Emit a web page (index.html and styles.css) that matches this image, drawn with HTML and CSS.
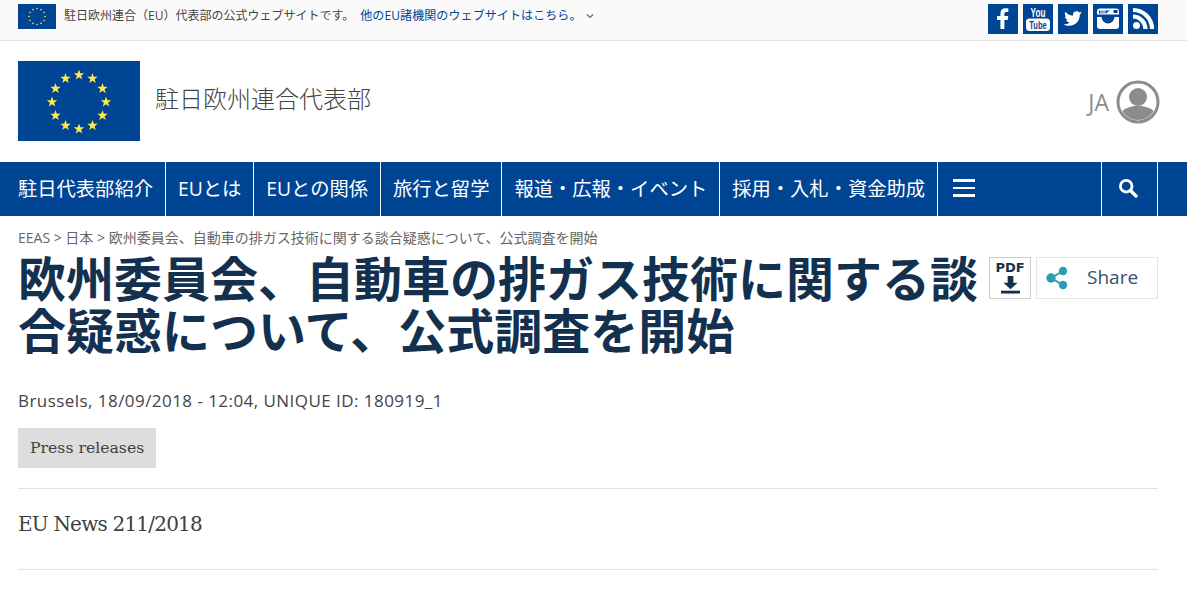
FILE: index.html
```html
<!DOCTYPE html>
<html lang="ja">
<head>
  <meta charset="UTF-8" />
  <meta name="viewport" content="width=device-width, initial-scale=1.0"/>
  <title>駐日欧州連合代表部</title>
  <link rel="stylesheet" href="styles.css">
</head>
<body>

  <svg class="defs" width="0" height="0">
    <symbol id="star" viewBox="-1 -1 2 2">
      <polygon points="0,-1 .235,-.324 .951,-.309 .38,.124 .588,.809 0,.4 -.588,.809 -.38,.124 -.951,-.309 -.235,-.324"/>
    </symbol>
  </svg>

  <div class="topbar">
    <div class="topbar-left">
      <svg class="mini-flag" viewBox="0 0 38 25">
        <rect width="38" height="25" fill="#004494"/>
        <g fill="#ffe94d">
          <circle cx="19" cy="4.500" r=".8"/><circle cx="23" cy="5.600" r=".8"/><circle cx="26" cy="8.500" r=".8"/>
          <circle cx="27" cy="12.500" r=".8"/><circle cx="26" cy="16.500" r=".8"/><circle cx="23" cy="19.400" r=".8"/>
          <circle cx="19" cy="20.500" r=".8"/><circle cx="15" cy="19.400" r=".8"/><circle cx="12" cy="16.500" r=".8"/>
          <circle cx="11" cy="12.500" r=".8"/><circle cx="12" cy="8.500" r=".8"/><circle cx="15" cy="5.600" r=".8"/>
        </g>
      </svg>
      <span class="topbar-text">駐日欧州連合（EU）代表部の公式ウェブサイトです。</span>
      <a class="topbar-link">他のEU諸機関のウェブサイトはこちら。</a>
      <svg class="chevron" viewBox="0 0 8 6"><path d="M1 1.500 4 4.500 7 1.500" fill="none" stroke="#666" stroke-width="1.200"/></svg>
    </div>
    <div class="socials">
      <a class="social">
        <svg viewBox="0 0 30 30"><path transform="translate(1.200 1.200) scale(.92)" fill="#fff" d="M16.500 26V16h3.600l.6-4.200h-4.200V9.300c0-1.200.4-2 2.100-2h2.200V3.500c-.4 0-1.700-.2-3.200-.2-3.200 0-5.400 2-5.400 5.500v3H8.500V16h3.700v10z"/></svg>
      </a>
      <a class="social">
        <svg viewBox="0 0 30 30">
          <text class="yt-you" transform="translate(15 12.500) scale(.68 1)" text-anchor="middle">You</text>
          <rect x="3" y="14.500" width="24" height="12.500" rx="3.500" fill="#fff"/>
          <text class="yt-tube" transform="translate(15 25) scale(.68 1)" text-anchor="middle">Tube</text>
        </svg>
      </a>
      <a class="social">
        <svg viewBox="0 0 30 30"><path transform="translate(2.800 2.200) scale(.82)" fill="#fff" d="M26 8.300c-.8.400-1.700.6-2.600.7.900-.6 1.600-1.400 2-2.500-.9.500-1.800.9-2.900 1.100-.8-.9-2-1.500-3.300-1.500-2.500 0-4.500 2-4.500 4.500 0 .4 0 .7.100 1-3.700-.2-7-2-9.200-4.700-.4.700-.6 1.400-.6 2.300 0 1.600.8 2.900 2 3.700-.7 0-1.400-.2-2-.6v.1c0 2.200 1.500 4 3.600 4.400-.4.100-.8.200-1.200.2-.3 0-.6 0-.8-.1.600 1.800 2.200 3.100 4.200 3.100-1.500 1.200-3.500 1.900-5.600 1.900H3.400c2 1.300 4.400 2 6.900 2 8.300 0 12.800-6.800 12.800-12.800v-.6c.9-.6 1.700-1.400 2.300-2.300z"/></svg>
      </a>
      <a class="social">
        <svg viewBox="0 0 30 30">
          <path fill="#fff" d="M7 4.500h16a3 3 0 0 1 3 3V22a3 3 0 0 1-3 3H7a3 3 0 0 1-3-3V7.500a3 3 0 0 1 3-3z"/>
          <path fill="#004494" d="M4 10.500h22V13h-4.500a6.500 6.500 0 0 1-13 0H4z"/>
          <path fill="#004494" d="M6 6.500h11.500a6 6 0 0 0-4 3H6z"/>
          <rect x="20.500" y="6" width="4" height="3" fill="#004494"/>
          <path stroke="#fff" d="M8 5v5M10 5v5M12 5v5"/>
        </svg>
      </a>
      <a class="social">
        <svg viewBox="0 0 30 30">
          <circle cx="8.500" cy="21.500" r="3.500" fill="#fff"/>
          <path fill="none" stroke="#fff" stroke-width="4.200" d="M5 12.500a12.500 12.500 0 0 1 12.500 12.500"/>
          <path fill="none" stroke="#fff" stroke-width="4.200" d="M5 6a19 19 0 0 1 19 19"/>
        </svg>
      </a>
    </div>
  </div>

  <header class="masthead">
    <div class="brand">
      <svg class="flag" viewBox="0 0 122 80">
        <rect width="122" height="80" fill="#004494"/>
        <g fill="#ffe94d">
          <use href="#star" x="55.500" y="8.500" width="11" height="11"/>
          <use href="#star" x="69" y="12" width="11" height="11"/>
          <use href="#star" x="79" y="22" width="11" height="11"/>
          <use href="#star" x="82.500" y="35.500" width="11" height="11"/>
          <use href="#star" x="79" y="49" width="11" height="11"/>
          <use href="#star" x="69" y="59" width="11" height="11"/>
          <use href="#star" x="55.500" y="62.500" width="11" height="11"/>
          <use href="#star" x="42" y="59" width="11" height="11"/>
          <use href="#star" x="32" y="49" width="11" height="11"/>
          <use href="#star" x="28.500" y="35.500" width="11" height="11"/>
          <use href="#star" x="32" y="22" width="11" height="11"/>
          <use href="#star" x="42" y="12" width="11" height="11"/>
        </g>
      </svg>
      <div class="brand-name">駐日欧州連合代表部</div>
    </div>
    <div class="lang">
      <span class="lang-code">JA</span>
      <svg class="avatar" viewBox="0 0 44 44">
        <defs><clipPath id="avatar-clip"><circle cx="22" cy="22" r="18"/></clipPath></defs>
        <circle cx="22" cy="22" r="20" fill="none" stroke="#8c8c8c" stroke-width="3"/>
        <circle cx="22" cy="17" r="9" fill="#8c8c8c"/>
        <path clip-path="url(#avatar-clip)" fill="#8c8c8c" d="M6 44V33c0-3 3-4.500 8-6l4-1h8l4 1c5 1.500 8 3 8 6v11z"/>
      </svg>
    </div>
  </header>

  <nav class="mainnav">
    <a class="nav-item">駐日代表部紹介</a>
    <a class="nav-item">EUとは</a>
    <a class="nav-item">EUとの関係</a>
    <a class="nav-item">旅行と留学</a>
    <a class="nav-item">報道・広報・イベント</a>
    <a class="nav-item">採用・入札・資金助成</a>
    <a class="nav-burger"><span></span><span></span><span></span></a>
    <a class="nav-search">
      <svg viewBox="0 0 20 20" width="20" height="20">
        <circle cx="8.200" cy="8.200" r="5.800" fill="none" stroke="#fff" stroke-width="2.800"/>
        <path d="M12.500 12.500 18 18" stroke="#fff" stroke-width="3.400" stroke-linecap="round"/>
      </svg>
    </a>
  </nav>

  <main class="content">
    <div class="breadcrumb">EEAS &gt; 日本 &gt; 欧州委員会、自動車の排ガス技術に関する談合疑惑について、公式調査を開始</div>
    <div class="title-row">
      <h1 class="title">欧州委員会、自動車の排ガス技術に関する談合疑惑について、公式調査を開始</h1>
      <div class="actions">
        <a class="pdf-btn">
          <span class="pdf-label">PDF</span>
          <svg viewBox="0 0 22 19" width="21" height="18">
            <path fill="#14304f" d="M8 0h6v7h4.500L11 14 3.500 7H8z"/>
            <rect x="1" y="15.500" width="20" height="3" fill="#14304f"/>
          </svg>
        </a>
        <a class="share-btn">
          <svg viewBox="0 0 22 24" width="22" height="24">
            <path d="M17 5 5 12 17 19" fill="none" stroke="#2a9db0" stroke-width="2"/>
            <circle cx="17" cy="5" r="4.200" fill="#2a9db0"/>
            <circle cx="5" cy="12" r="4.700" fill="#2a9db0"/>
            <circle cx="17" cy="19" r="4.200" fill="#2a9db0"/>
          </svg>
          <span>Share</span>
        </a>
      </div>
    </div>
    <div class="meta">Brussels, 18/09/2018 - 12:04, UNIQUE ID: 180919_1</div>
    <a class="tag">Press releases</a>
    <div class="news-row">EU News 211/2018</div>
  </main>

</body>
</html>
```

FILE: styles.css
```css
body {
  margin: 0;
  background: #fff;
  font-family: "Open Sans", "Noto Sans CJK JP", sans-serif;
  color: #404040;
  overflow: hidden;
}

.defs { position: absolute; }

.topbar {
  display: flex;
  justify-content: space-between;
  height: 41px;
  padding: 4px 29px 0 18px;
  box-sizing: border-box;
  background: #fafafa;
  border-bottom: 1px solid #e3e3e3;
}

.topbar-left {
  display: flex;
  align-items: flex-start;
  font-size: 12px;
  line-height: 24px;
}

.mini-flag { width: 38px; height: 25px; margin-right: 8px; }
.topbar-text { color: #444; margin-right: 6px; }
.topbar-link { color: #004494; letter-spacing: .1px; }
.chevron { width: 8px; height: 6px; margin: 9px 0 0 4px; }

.socials { display: flex; gap: 5px; }

.social {
  width: 30px;
  height: 30px;
  background: #004494;
}

.social svg { display: block; width: 30px; height: 30px; }

.yt-you { font: 700 12px "Liberation Sans", sans-serif; fill: #fff; }
.yt-tube { font: 700 11px "Liberation Sans", sans-serif; fill: #004494; }

.masthead {
  display: flex;
  justify-content: space-between;
  align-items: center;
  height: 121px;
  padding: 0 27px 0 18px;
}

.brand { display: flex; align-items: center; margin-top: -1px; }
.flag { width: 122px; height: 80px; margin-right: 15px; }
.brand-name { font-size: 24px; color: #444; font-weight: 300; margin-top: -8px; }

.lang { display: flex; align-items: center; gap: 7px; }
.lang-code { font-size: 23px; color: #8c8c8c; }
.avatar { width: 44px; height: 44px; }

.mainnav {
  display: flex;
  height: 54px;
  background: #004494;
  padding-right: 29px;
}

.nav-item {
  display: flex;
  align-items: center;
  padding: 0 12px 3px;
  color: #fff;
  font-size: 19.300px;
  white-space: nowrap;
  border-right: 1px solid #fff;
}

.nav-item:first-child { padding-left: 18px; }

.nav-burger {
  flex: 1;
  display: flex;
  flex-direction: column;
  justify-content: center;
  gap: 5px;
  padding: 0 0 2px 15px;
}

.nav-burger span { display: block; width: 22px; height: 2.500px; background: #fff; }

.nav-search {
  display: flex;
  align-items: center;
  justify-content: center;
  width: 57px;
  padding: 0 4px 3px 0;
  box-sizing: border-box;
  border-left: 1px solid #fff;
  border-right: 1px solid #fff;
}

.content { padding: 12px 29px 0 18px; }

.breadcrumb { font-size: 14px; line-height: 20px; color: #666; margin-bottom: 5px; }

.title-row { display: flex; align-items: flex-start; }

.title {
  flex: 1;
  margin: 0;
  font-size: 48px;
  line-height: 52px;
  font-weight: 700;
  color: #14304f;
}

.actions { display: flex; gap: 5px; margin-top: 4px; }

.pdf-btn {
  display: flex;
  flex-direction: column;
  align-items: center;
  width: 42px;
  height: 42px;
  box-sizing: border-box;
  border: 1px solid #ccc;
}

.pdf-label {
  margin-top: 2px;
  font-family: "DejaVu Sans", sans-serif;
  font-size: 13px;
  font-weight: 700;
  line-height: 16px;
  color: #14304f;
}

.share-btn {
  display: flex;
  align-items: center;
  gap: 19px;
  width: 122px;
  height: 42px;
  box-sizing: border-box;
  padding-left: 9px;
  border: 1px solid #e6e6e6;
  color: #34506e;
  font-size: 19px;
}

.share-btn span { margin-top: -3px; }

.meta { margin-top: 30px; font-size: 17px; letter-spacing: .45px; line-height: 28px; color: #444; }

.tag {
  display: block;
  width: 138px;
  height: 40px;
  margin-top: 13px;
  box-sizing: border-box;
  padding-left: 12px;
  background: #ddd;
  font-family: "DejaVu Serif", serif;
  font-size: 15.700px;
  line-height: 40px;
  color: #404040;
}

.news-row {
  margin-top: 20px;
  height: 82px;
  box-sizing: border-box;
  border-top: 1px solid #e3e3e3;
  border-bottom: 1px solid #e3e3e3;
  font-family: "DejaVu Serif", serif;
  font-size: 20px;
  letter-spacing: -.8px;
  line-height: 71px;
  color: #404040;
}
```
